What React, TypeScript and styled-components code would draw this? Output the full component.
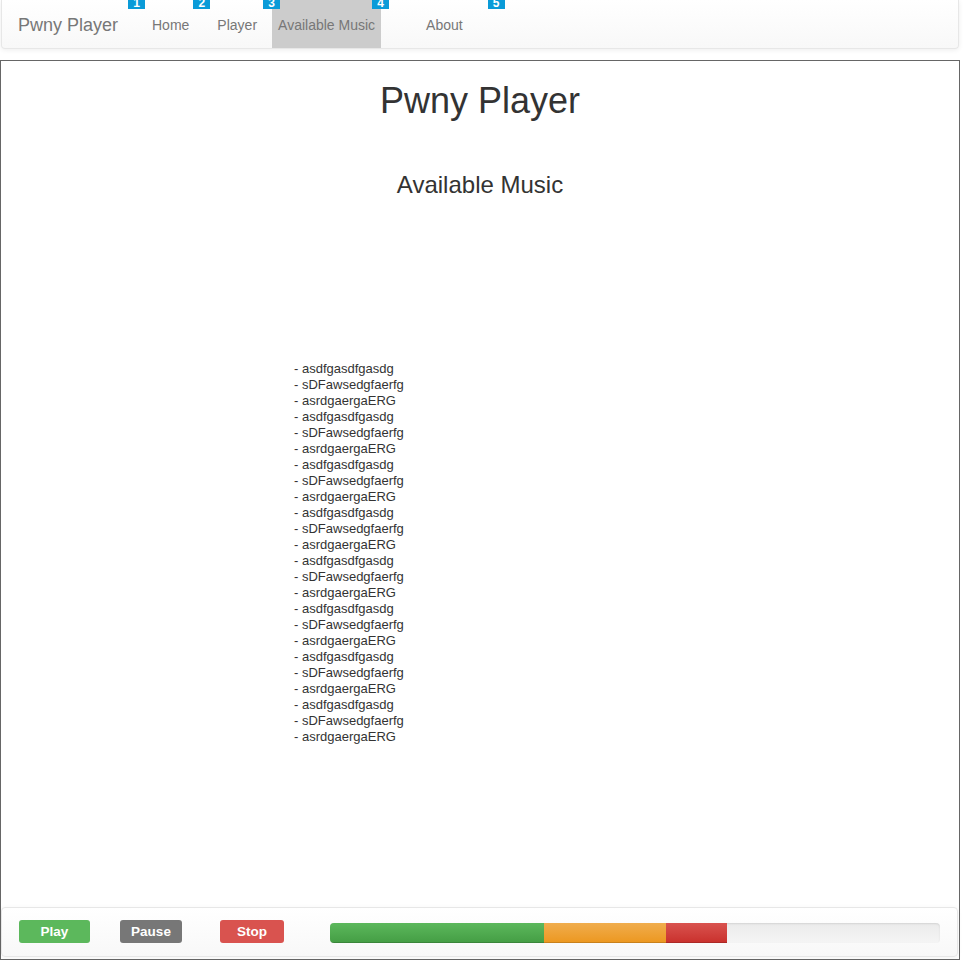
import React from 'react'
import styled, { createGlobalStyle } from 'styled-components'

const GlobalStyle = createGlobalStyle`
  html, body {
    margin: 0;
    padding: 0;
    background: #fff;
  }
  body {
    font-family: "Liberation Sans", Arial, Helvetica, sans-serif;
    color: #333;
  }
`

const Page = styled.div`
  width: 960px;
`

const Navbar = styled.nav`
  position: relative;
  display: flex;
  align-items: flex-start;
  height: 48px;
  margin: 0 1px;
  border: 1px solid #e7e7e7;
  border-top: none;
  border-radius: 0 0 4px 4px;
  background-image: linear-gradient(to bottom, #fff 0%, #f8f8f8 100%);
  box-shadow: 0 1px 5px rgba(0, 0, 0, 0.075);
`

const Brand = styled.div`
  padding: 15px 0 0 16px;
  width: 119px;
  font-size: 18px;
  line-height: 20px;
  color: #777;
`

const NavItem = styled.div<{ $padL: number; $padR: number; $active?: boolean }>`
  position: relative;
  height: 48px;
  box-sizing: border-box;
  padding: 15px ${(p) => p.$padR}px 0 ${(p) => p.$padL}px;
  font-size: 14px;
  line-height: 20px;
  color: #777;
  background: ${(p) => (p.$active ? '#ccc' : 'transparent')};
  white-space: nowrap;
`

const KeyBadge = styled.span`
  position: absolute;
  top: -3px;
  left: -9px;
  width: 17px;
  height: 12px;
  background: #0a9bd8;
  color: #fff;
  font-size: 12px;
  font-weight: bold;
  line-height: 12px;
  text-align: center;
  overflow: hidden;
`

const MainBox = styled.main`
  display: flex;
  flex-direction: column;
  box-sizing: border-box;
  height: 900px;
  margin-top: 11px;
  border: 1px solid #666;
`

const Content = styled.section`
  flex: 1;
`

const Title = styled.h1`
  margin: 20px 0 0;
  font-size: 36px;
  font-weight: 500;
  line-height: 1.1;
  text-align: center;
  color: #333;
`

const Subtitle = styled.h2`
  margin: 51px 0 0;
  font-size: 24px;
  font-weight: 500;
  line-height: 1.1;
  text-align: center;
  color: #333;
`

const SongList = styled.ul`
  list-style: none;
  margin: 163px 0 0;
  padding: 0 0 0 293px;
  font-size: 13px;
  line-height: 16px;
  color: #333;
`

const BottomBar = styled.footer`
  display: flex;
  align-items: flex-start;
  box-sizing: border-box;
  height: 50px;
  margin: 0 1px 2px 0;
  padding: 12px 0 0 17px;
  border: 1px solid #e7e7e7;
  border-radius: 4px;
  background-image: linear-gradient(to bottom, #fff 0%, #f8f8f8 100%);
  box-shadow: 0 1px 5px rgba(0, 0, 0, 0.05);
`

const ControlButton = styled.button<{ $bg: string; $w: number; $mr: number }>`
  width: ${(p) => p.$w}px;
  height: 23px;
  margin-right: ${(p) => p.$mr}px;
  padding: 0;
  border: none;
  border-radius: 3px;
  background: ${(p) => p.$bg};
  color: #fff;
  font-family: "Liberation Sans", Arial, sans-serif;
  font-size: 13.5px;
  font-weight: bold;
  line-height: 23px;
  text-align: center;
`

const Progress = styled.div`
  display: flex;
  width: 610px;
  height: 20px;
  margin-top: 3px;
  border-radius: 4px;
  overflow: hidden;
  background-image: linear-gradient(to bottom, #ebebeb 0%, #f5f5f5 100%);
  box-shadow: inset 0 1px 2px rgba(0, 0, 0, 0.1);
`

const Segment = styled.div<{ $from: string; $to: string }>`
  height: 100%;
  background-image: linear-gradient(to bottom, ${(p) => p.$from} 0%, ${(p) => p.$to} 100%);
  box-shadow: inset 0 -1px 0 rgba(0, 0, 0, 0.15);
`

const songs = ['asdfgasdfgasdg', 'sDFawsedgfaerfg', 'asrdgaergaERG']
const list = Array.from({ length: 24 }, (_, i) => songs[i % 3])

const segments = [
  { pct: 35.1, from: '#5cb85c', to: '#449d44' },
  { pct: 20, from: '#f0ad4e', to: '#ec971f' },
  { pct: 10, from: '#d9534f', to: '#c9302c' },
]

export default function App() {
  return (
    <Page>
      <GlobalStyle />
      <Navbar>
        <Brand>Pwny Player</Brand>
        <NavItem $padL={15} $padR={13}>
          <KeyBadge>1</KeyBadge>
          Home
        </NavItem>
        <NavItem $padL={15} $padR={15}>
          <KeyBadge>2</KeyBadge>
          Player
        </NavItem>
        <NavItem $padL={6} $padR={6} $active>
          <KeyBadge>3</KeyBadge>
          Available Music
        </NavItem>
        <NavItem $padL={30} $padR={0}>
          <KeyBadge>4</KeyBadge>
        </NavItem>
        <NavItem $padL={15} $padR={34}>
          About
        </NavItem>
        <NavItem $padL={0} $padR={0}>
          <KeyBadge>5</KeyBadge>
        </NavItem>
      </Navbar>

      <MainBox>
        <Content>
          <Title>Pwny Player</Title>
          <Subtitle>Available Music</Subtitle>
          <SongList>
            {list.map((s, i) => (
              <li key={i}>- {s}</li>
            ))}
          </SongList>
        </Content>

        <BottomBar>
          <ControlButton $bg="#5cb85c" $w={71} $mr={30}>
            Play
          </ControlButton>
          <ControlButton $bg="#777" $w={62} $mr={38}>
            Pause
          </ControlButton>
          <ControlButton $bg="#d9534f" $w={64} $mr={46}>
            Stop
          </ControlButton>
          <Progress>
            {segments.map((s, i) => (
              <Segment key={i} $from={s.from} $to={s.to} style={{ width: `${s.pct}%` }} />
            ))}
          </Progress>
        </BottomBar>
      </MainBox>
    </Page>
  )
}
